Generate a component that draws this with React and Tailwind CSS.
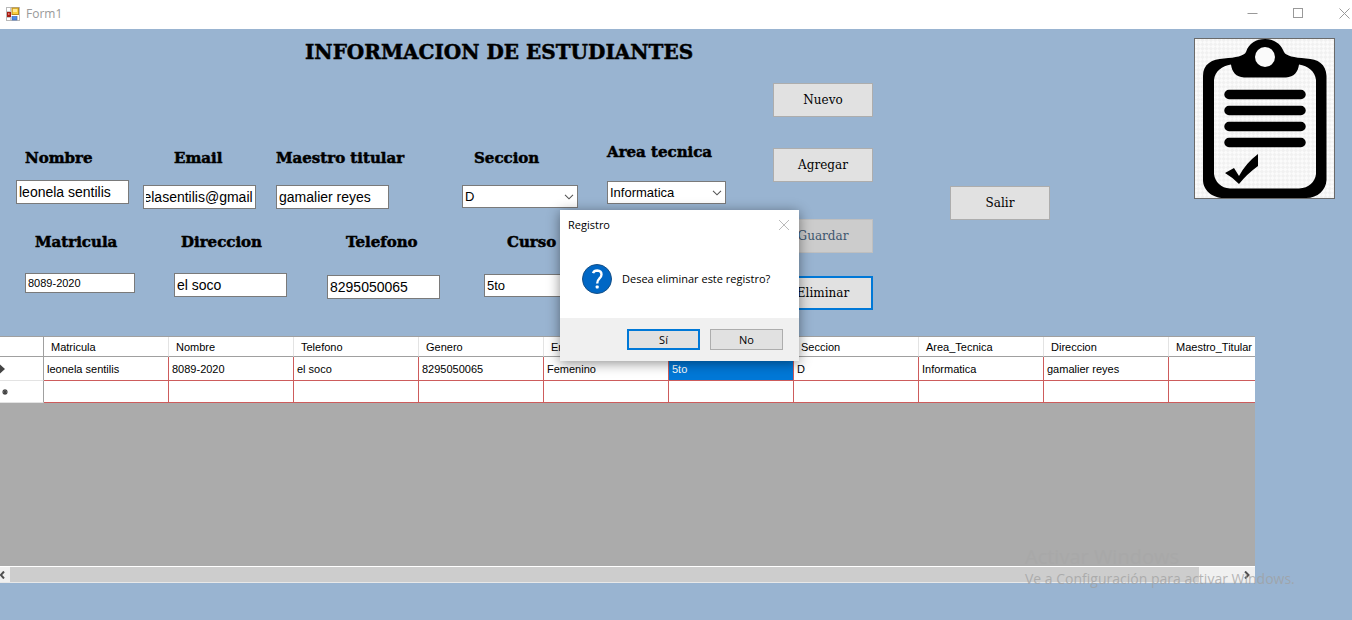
import React from "react";

const inputBase =
  "block border border-[#7a7a7a] bg-white px-[2px] font-['Liberation_Sans',sans-serif] text-black outline-none";
const displayFont =
  "font-['DejaVu_Serif',serif] font-bold text-black [-webkit-text-stroke:0.5px_black]";
const buttonBase =
  "block h-[34px] w-[100px] font-['DejaVu_Serif',serif] text-xs";

function Label({ htmlFor, className = "", children }) {
  return (
    <label
      htmlFor={htmlFor}
      className={`block h-5 whitespace-nowrap text-[15px] leading-5 ${displayFont} ${className}`}
    >
      {children}
    </label>
  );
}

function Combo({ id, value, className = "" }) {
  return (
    <div className={`relative ${className}`}>
      <select
        id={id}
        defaultValue={value}
        className={`${inputBase} h-[23px] w-full appearance-none text-[13px]`}
      >
        <option>{value}</option>
      </select>
      <svg
        viewBox="0 0 10 6"
        className="pointer-events-none absolute right-1 top-[9px] h-[6px] w-[10px]"
        fill="none"
        stroke="#555"
        strokeWidth="1.1"
      >
        <path d="M1 0.8 L5 4.8 L9 0.8" />
      </svg>
    </div>
  );
}

function FormIcon() {
  return (
    <svg viewBox="0 0 14 14" className="h-[14px] w-[14px]">
      <rect x="0.5" y="0.5" width="13" height="13" fill="#fff" stroke="#b9b9b9" />
      <path d="M4.5 1v12M1 4.5h4M1 10.5h4" stroke="#c9c9c9" fill="none" />
      <rect x="6" y="1" width="6.5" height="6.5" fill="#f8cf3c" stroke="#b98a1c" />
      <rect x="7" y="2" width="4" height="3" fill="#ffe893" />
      <rect x="1" y="5" width="4" height="5" fill="#a81c12" />
      <rect x="2" y="6" width="1.5" height="2" fill="#e0736a" />
      <rect x="6" y="9.5" width="5" height="3.5" fill="#4d8ae6" stroke="#2d62b8" strokeWidth="0.6" />
      <path d="M11.5 9v4" stroke="#c9c9c9" />
    </svg>
  );
}

function Clipboard() {
  return (
    <svg viewBox="0 0 141 161" className="block h-[161px] w-[141px]" role="img" aria-label="Portapapeles">
      <defs>
        <pattern id="checker" width="6" height="6" patternUnits="userSpaceOnUse" patternTransform="rotate(45)">
          <rect width="6" height="6" fill="#fbfbfb" />
          <rect width="3" height="3" fill="#f1f1f1" />
          <rect x="3" y="3" width="3" height="3" fill="#f1f1f1" />
        </pattern>
      </defs>
      <rect x="0.5" y="0.5" width="140" height="160" fill="url(#checker)" />
      <path
        d="M9 38 C9 26 18 21 30 20.5 C42 19.5 50 18 52 14 C55 5 62 1 71 1 C80 1 87 6 90 14 C92 18 100 19.500 112 20.500 C124 21 132 26 132.500 38 V142 C132 152 124 160 112 160 H30 C18 160 9 152 9 142 Z"
        fill="#000"
      />
      <path
        d="M37 26.500 C28 28 21 33 20 42 V136 C21 144 27 150 36 150.500 H105 C115 150 121 144 122 136 V42 C121 33 114 28 105 26.500 C104 34 100 39 92 39.500 H50 C42 39 38 34 37 26.500 Z"
        fill="url(#checker)"
      />
      <circle cx="71" cy="19" r="10" fill="#fafafa" />
      <path d="M35 56.500H107M35 72.500H107M35 88.500H107M35 104.500H107" stroke="#000" strokeWidth="9.5" strokeLinecap="round" />
      <path d="M31 135 L40 130 L45 138 Q52 125 64 116 V128 Q53 136 45 146 Q38 139 31 135 Z" fill="#000" />
      <rect x="0.5" y="0.5" width="140" height="160" fill="none" stroke="#6a6a6a" />
    </svg>
  );
}

const columns = [
  "Matricula", "Nombre", "Telefono", "Genero", "Email",
  "Curso", "Seccion", "Area_Tecnica", "Direccion", "Maestro_Titular",
];
const record = [
  "leonela sentilis", "8089-2020", "el soco", "8295050065", "Femenino",
  "5to", "D", "Informatica", "gamalier reyes", "",
];

function TitleBar() {
  return (
    <header className="flex h-[29px] items-center justify-between bg-white pl-[6px]">
      <div className="flex items-center gap-[6px] pb-[2px]">
        <FormIcon />
        <span className="font-['Open_Sans',sans-serif] text-xs text-[#999]">Form1</span>
      </div>
      <div className="flex items-center gap-[35px] pb-[3px] pr-[2px]">
        <button aria-label="Minimizar">
          <svg viewBox="0 0 11 11" className="block h-[11px] w-[11px]" stroke="#999" fill="none"><path d="M0.500 5.500h10" /></svg>
        </button>
        <button aria-label="Maximizar">
          <svg viewBox="0 0 11 11" className="block h-[11px] w-[11px]" stroke="#999" fill="none"><rect x="0.500" y="0.500" width="9" height="9" /></svg>
        </button>
        <button aria-label="Cerrar">
          <svg viewBox="0 0 11 11" className="block h-[11px] w-[11px]" stroke="#999" fill="none"><path d="M0.500 0.500l10 10M10.500 0.500l-10 10" /></svg>
        </button>
      </div>
    </header>
  );
}

function StudentForm() {
  return (
    <section className="w-[773px] shrink-0">
      <h1 className={`pl-[305px] pt-[9px] text-xl leading-7 whitespace-nowrap ${displayFont}`}>
        INFORMACION DE ESTUDIANTES
      </h1>
      <div className="mt-[76px] grid grid-cols-[127px_133px_186px_145px_1fr] pl-4">
        <div className="pt-[6px]">
          <Label htmlFor="nombre" className="pl-[9px]">Nombre</Label>
          <input id="nombre" defaultValue="leonela sentilis" className={`${inputBase} mt-3 h-6 w-[113px] text-sm`} />
        </div>
        <div className="pt-[6px]">
          <Label htmlFor="email" className="pl-[31px]">Email</Label>
          <input
            id="email"
            defaultValue="leonelasentilis@gmail"
            ref={(el) => { if (el) el.scrollLeft = el.scrollWidth; }}
            className={`${inputBase} mt-[17px] h-6 w-[113px] text-sm`}
          />
        </div>
        <div className="pt-[6px]">
          <Label htmlFor="maestro">Maestro titular</Label>
          <input id="maestro" defaultValue="gamalier reyes" className={`${inputBase} mt-[17px] h-6 w-[113px] text-sm`} />
        </div>
        <div className="pt-[6px]">
          <Label htmlFor="seccion" className="pl-3">Seccion</Label>
          <Combo id="seccion" value="D" className="mt-[17px] w-[116px]" />
        </div>
        <div>
          <Label htmlFor="area">Area tecnica</Label>
          <Combo id="area" value="Informatica" className="mt-[19px] w-[119px]" />
        </div>
      </div>
      <div className="mt-[23px] grid grid-cols-[149px_153px_157px_1fr] pl-[25px]">
        <div>
          <Label htmlFor="matricula" className="pl-[10px]">Matricula</Label>
          <input id="matricula" defaultValue="8089-2020" className={`${inputBase} mt-[21px] h-5 w-[110px] text-[11px]`} />
        </div>
        <div>
          <Label htmlFor="direccion" className="pl-[7px]">Direccion</Label>
          <input id="direccion" defaultValue="el soco" className={`${inputBase} mt-[21px] h-6 w-[113px] text-sm`} />
        </div>
        <div>
          <Label htmlFor="telefono" className="pl-[19px]">Telefono</Label>
          <input id="telefono" defaultValue="8295050065" className={`${inputBase} mt-[23px] h-6 w-[113px] text-sm`} />
        </div>
        <div>
          <Label htmlFor="curso" className="pl-[23px]">Curso</Label>
          <Combo id="curso" value="5to" className="mt-[22px] w-[116px]" />
        </div>
      </div>
    </section>
  );
}

function StudentGrid() {
  return (
    <section className="mr-[97px] flex h-[247px] flex-col bg-[#ababab]">
      <div className="grow overflow-hidden border-t border-[#a0a0a0]">
        <table className="w-[1294px] table-fixed border-separate border-spacing-0 font-['Liberation_Sans',sans-serif] text-[11px] text-black">
          <colgroup>
            <col className="w-[44px]" />
            {columns.map((c) => <col key={c} className="w-[125px]" />)}
          </colgroup>
          <thead>
            <tr className="h-5">
              <th className="border-b border-r border-[#a0a0a0] bg-white p-0" aria-label="Fila" />
              {columns.map((c) => (
                <th key={c} className="border-b border-r border-b-[#a0a0a0] border-r-[#e3e3e3] bg-white pb-0 pl-[7px] pr-0 pt-[2px] text-left font-normal">
                  {c}
                </th>
              ))}
            </tr>
          </thead>
          <tbody>
            <tr className="h-6">
              <td className="border-b border-r border-b-[#e3e3e3] border-r-[#a0a0a0] bg-white p-0">
                <svg viewBox="0 0 5 10" className="block h-[10px] w-[5px]"><path d="M0 0.500L5 5L0 9.500Z" fill="#444" /></svg>
              </td>
              {record.map((v, i) => (
                <td
                  key={columns[i]}
                  className={`border-b border-r border-[#cd5c5c] pb-0 pl-[3px] pr-0 pt-[2px] ${i === 5 ? "bg-[#0078d7] text-white" : "bg-white"}`}
                >
                  {v}
                </td>
              ))}
            </tr>
            <tr className="h-[22px]">
              <td className="border-b border-r border-b-[#e3e3e3] border-r-[#a0a0a0] bg-white p-0">
                <svg viewBox="0 0 8 8" className="ml-[1px] block h-2 w-2" stroke="#444" strokeWidth="1.2"><path d="M4 1v6M1 4h6M2 2l4 4M6 2l-4 4" /></svg>
              </td>
              {columns.map((c) => <td key={c} className="border-b border-r border-[#cd5c5c] bg-white p-0" />)}
            </tr>
          </tbody>
        </table>
      </div>
      <div className="flex h-[17px] border-y border-t-white border-b-[#e8e8e8] bg-[#f0f0f0]">
        <button aria-label="Desplazar a la izquierda" className="flex w-[10px] items-center">
          <svg viewBox="0 0 5 8" className="h-2 w-[5px]" fill="none" stroke="#505050" strokeWidth="2"><path d="M4 0.500L0.800 4L4 7.500" /></svg>
        </button>
        <div className="grow bg-[#cdcdcd]" />
        <button aria-label="Desplazar a la derecha" className="flex w-14 items-center justify-end pr-[5px]">
          <svg viewBox="0 0 6 8" className="h-2 w-[6px]" fill="none" stroke="#505050" strokeWidth="2"><path d="M1 0.500L4.500 4L1 7.500" /></svg>
        </button>
      </div>
    </section>
  );
}

function ConfirmDialog() {
  return (
    <div
      role="dialog"
      aria-labelledby="dialog-title"
      className="absolute left-[560px] top-[210px] w-[239px] bg-white font-['Open_Sans',sans-serif] text-black shadow-[0_2px_12px_rgba(0,0,0,0.45)]"
    >
      <div className="flex h-[30px] items-center justify-between pl-2 pr-[10px]">
        <h2 id="dialog-title" className="text-[11px]">Registro</h2>
        <button aria-label="Cerrar">
          <svg viewBox="0 0 10 10" className="block h-[10px] w-[10px]" stroke="#bbb" fill="none"><path d="M0 0l10 10M10 0l-10 10" /></svg>
        </button>
      </div>
      <div className="flex h-[78px] items-center gap-[10px] pl-[22px]">
        <svg viewBox="0 0 30 30" className="h-[30px] w-[30px] shrink-0">
          <circle cx="15" cy="15" r="14.500" fill="#0067c5" stroke="#154f86" />
          <path d="M11 9.200 Q12 6.500 15.200 6.500 Q19.500 6.700 19.500 10.500 Q19.500 13 17.200 14.800 Q15.200 16.500 15.200 19.500" fill="none" stroke="#fff" strokeWidth="2.400" />
          <rect x="13.700" y="21.500" width="3" height="3" rx="0.800" fill="#fff" />
        </svg>
        <p className="whitespace-nowrap text-[11px]">Desea eliminar este registro?</p>
      </div>
      <div className="flex h-[43px] items-center justify-end gap-[10px] bg-[#f0f0f0] pr-4">
        <button className="h-[21px] w-[73px] border-2 border-[#0078d7] bg-[#e1e1e1] text-[11px] leading-4">Sí</button>
        <button className="h-[21px] w-[73px] border border-[#adadad] bg-[#e1e1e1] text-[11px] leading-4">No</button>
      </div>
    </div>
  );
}

export default function App() {
  return (
    <div className="relative min-h-screen overflow-hidden bg-[#99b4d1]">
      <TitleBar />
      <main>
        <div className="flex h-[307px]">
          <StudentForm />
          <div className="w-[100px] shrink-0 pt-[54px]">
            <button className={`${buttonBase} border border-[#adadad] bg-[#e1e1e1] text-black`}>Nuevo</button>
            <button className={`${buttonBase} mt-[31px] border border-[#adadad] bg-[#e1e1e1] text-black`}>Agregar</button>
            <button disabled className={`${buttonBase} mt-[37px] border border-[#bfbfbf] bg-[#cccccc] text-[#3d566e]`}>Guardar</button>
            <button className={`${buttonBase} mt-[23px] border-2 border-[#0078d7] bg-[#e1e1e1] text-black`}>Eliminar</button>
          </div>
          <div className="ml-[77px] pt-[157px]">
            <button className={`${buttonBase} border border-[#adadad] bg-[#e1e1e1] text-black`}>Salir</button>
          </div>
          <div className="ml-auto pr-[17px] pt-[9px]">
            <Clipboard />
          </div>
        </div>
        <StudentGrid />
      </main>
      <ConfirmDialog />
      <div className="pointer-events-none absolute left-[1025px] top-[545px] whitespace-nowrap font-['Open_Sans',sans-serif] text-[#a0a0a0]/75">
        <p className="text-xl leading-6 text-[#a8a8a8]">Activar Windows</p>
        <p className="text-sm leading-5">Ve a Configuración para activar Windows.</p>
      </div>
    </div>
  );
}
